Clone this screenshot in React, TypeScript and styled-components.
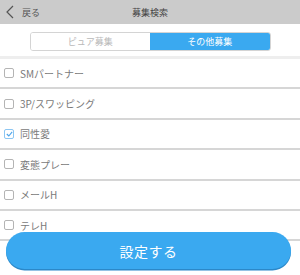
import React from 'react'
import styled, { createGlobalStyle } from 'styled-components'

const GlobalStyle = createGlobalStyle`
  html, body {
    margin: 0;
    padding: 0;
    background: #fff;
    font-family: 'Noto Sans CJK JP', 'Noto Sans', sans-serif;
  }
`

const Page = styled.div`
  width: 300px;
  height: 275px;
  position: relative;
  overflow: hidden;
  background: #fff;
`
const Header = styled.header`
  height: 24px;
  background: #cbcbcb;
  display: flex;
  align-items: center;
  justify-content: center;
  position: relative;
`
const Title = styled.h1`
  margin: 0;
  font-size: 9px;
  font-weight: 400;
  color: #444;
`
const BackButton = styled.button`
  position: absolute;
  left: 6px;
  top: 0;
  height: 24px;
  display: flex;
  align-items: center;
  gap: 8px;
  border: none;
  background: none;
  padding: 0;
  font-family: inherit;
  font-size: 9px;
  color: #555;
`
const TabBar = styled.div`
  display: flex;
  justify-content: center;
  padding: 8px 0 5px;
`
const Tabs = styled.div`
  width: 241px;
  height: 19px;
  display: flex;
  border: 1px solid #d4d4d4;
  border-radius: 3px;
  overflow: hidden;
  box-sizing: border-box;
`
const Tab = styled.div<{ $active?: boolean }>`
  flex: 1;
  display: flex;
  align-items: center;
  justify-content: center;
  font-size: 9px;
  color: ${(p) => (p.$active ? '#fff' : '#b9b9b9')};
  background: ${(p) => (p.$active ? '#3aa9f0' : '#fff')};
`
const List = styled.ul`
  list-style: none;
  margin: 0;
  padding: 0;
  border-top: 3px solid #eeeeee;
`
const Row = styled.li`
  height: 28.4px;
  display: flex;
  align-items: center;
  gap: 6px;
  padding-left: 4px;
  border-bottom: 2px solid #d6d6d6;
  font-size: 10px;
  color: #7a7a7a;
`
const Box = styled.span<{ $checked?: boolean }>`
  width: 8px;
  height: 8px;
  border: 1px solid ${(p) => (p.$checked ? '#8cc6f2' : '#b4b4b4')};
  border-radius: 2px;
  display: flex;
  align-items: center;
  justify-content: center;
`
const Submit = styled.button`
  position: absolute;
  left: 6px;
  right: 9px;
  bottom: 6px;
  height: 37px;
  border: none;
  border-radius: 19px;
  background: #3aa9f0;
  box-shadow: 0 1.5px 0 #2b88c9;
  color: #fff;
  font-family: inherit;
  font-size: 14px;
  letter-spacing: 0.5px;
`

const options = [
  { label: 'SMパートナー', checked: false },
  { label: '3P/スワッピング', checked: false },
  { label: '同性愛', checked: true },
  { label: '変態プレー', checked: false },
  { label: 'メールH', checked: false },
  { label: 'テレH', checked: false },
]

export default function App() {
  return (
    <Page>
      <GlobalStyle />
      <Header>
        <BackButton>
          <svg width="8" height="14" viewBox="0 0 8 14">
            <path d="M7 1 L1 7 L7 13" fill="none" stroke="#555" strokeWidth="1.2" />
          </svg>
          戻る
        </BackButton>
        <Title>募集検索</Title>
      </Header>
      <TabBar>
        <Tabs>
          <Tab>ピュア募集</Tab>
          <Tab $active>その他募集</Tab>
        </Tabs>
      </TabBar>
      <List>
        {options.map((o) => (
          <Row key={o.label}>
            <Box $checked={o.checked}>
              {o.checked && (
                <svg width="7" height="6" viewBox="0 0 7 6">
                  <path d="M0.8 3 L2.8 5 L6.2 0.8" fill="none" stroke="#4aa3ea" strokeWidth="1.1" />
                </svg>
              )}
            </Box>
            {o.label}
          </Row>
        ))}
      </List>
      <Submit>設定する</Submit>
    </Page>
  )
}
